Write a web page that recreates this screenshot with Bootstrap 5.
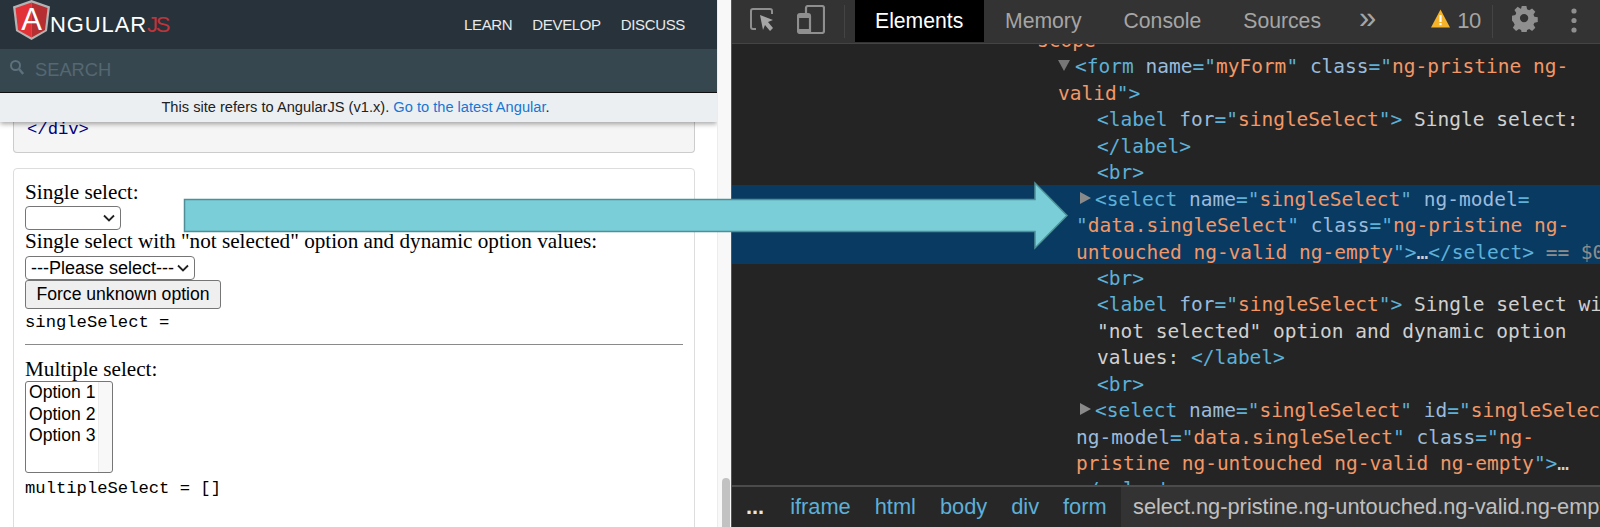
<!DOCTYPE html>
<html lang="en">
<head>
<meta charset="utf-8">
<title>AngularJS select</title>
<link rel="stylesheet" href="https://cdn.jsdelivr.net/npm/bootstrap@5.3.0/dist/css/bootstrap.min.css">
<style>
html,body{height:527px;overflow:hidden;background:#fff}
.stage{position:relative;width:1600px;height:527px;overflow:hidden}
.leftpane{width:731px;height:527px}
.leftmain{width:717px;height:527px;overflow:hidden;position:relative}
.pagebar{width:14px;height:527px;background:#f8f8f8;border-left:1px solid #ececec}
.pagethumb{width:8px;height:49px;background:#c2c2c2;border-radius:4px 4px 0 0;margin:478px 0 0 4px}
.ngbar{height:49px;background:#27323a;padding:0 32px 0 13px;flex-wrap:nowrap}
.brandrow{height:49px;font:400 22px/49px "Liberation Sans",sans-serif;color:#fff;letter-spacing:.9px}
.brandrow svg{width:37px;height:40px}
.brandjs{color:#c0343a;letter-spacing:-2.4px;margin-left:0}
.ngmenu{gap:20px;font:400 15px/1 "Liberation Sans",sans-serif;letter-spacing:-.35px;color:#e8eaeb}
.searchbar{height:43px;background:#37474f;padding:0 0 0 10px;gap:11px;font:400 18.3px/1 "Liberation Sans",sans-serif;color:#546872}
.searchbar svg{width:14px;height:15px;margin-top:-6px}
.blackline{height:1px;background:#101010}
.refbanner{height:29px;background:#eceff1;font:400 14.65px/29px "Liberation Sans",sans-serif;color:#212121;text-align:center;box-shadow:0 2px 5px rgba(0,0,0,.35);position:relative;z-index:2;padding-right:6px}
.refbanner a{color:#1976d2;text-decoration:none}
.docbody{padding:0 22px 0 13px}
.codebox{height:31px;background:#f5f5f5;border:1px solid #ccc;border-top:0;border-radius:0 0 4px 4px;padding:0 13px;font:17.2px/15px "Liberation Mono",monospace;color:#000080}
.democard{margin-top:15px;height:400px;border:1px solid #ddd;border-radius:4px;padding:12px 11px 0;font:21.2px/23px "Liberation Serif",serif;color:#000}
.democard select,.democard button{font:17.6px "Liberation Sans",sans-serif;color:#000;display:block}
.selone,.seltwo{appearance:none;-webkit-appearance:none;height:24px;border:1px solid #767676;border-radius:4px;padding:0 0 0 5px;background:#fff url("data:image/svg+xml,%3Csvg xmlns='http://www.w3.org/2000/svg' width='12' height='8'%3E%3Cpath d='M1 1.500l5 5 5-5' fill='none' stroke='%23222' stroke-width='1.800'/%3E%3C/svg%3E") no-repeat right 5px center}
.selone{width:96px;margin-top:2px}
.democard .seltwo{width:170px;margin-top:3px;font-size:18px}
.forcebtn{width:196px;height:29px;padding:0;background:#efefef;border:1px solid #767676;border-radius:3px}
.monoline{font:17.2px/20px "Liberation Mono",monospace;margin-top:4px}
.monotwo{margin-top:6px}
.sephr{margin:11px 0 13px;border:0;border-top:1px solid #8a8a8a;opacity:1;height:0}
.selmulti{width:88px;height:92px;margin-top:0;overflow-y:scroll;border:1px solid #767676;border-radius:3px;padding:0;background:linear-gradient(to left,#f8f8f8 13px,#ececec 13px,#ececec 14px,#fff 14px)}
.selmulti option{padding:0 3px;line-height:21.7px;min-height:21.7px}
.rightpane{width:869px;height:527px;background:#242424;border-left:1px solid #555;overflow:hidden}
.dttoolbar{height:44px;flex:none;background:#333;border-bottom:1px solid #444;position:relative;z-index:2;font:400 21.2px/42px "Liberation Sans",sans-serif;color:#a5a5a5}
.dttoolbar svg{display:block;flex:none}
.iconone{margin:8px 0 0 18px}
.icontwo{margin:5px 0 0 23px}
.vsep{width:1px;height:33px;background:#444;margin:5px 0 0 19px}
.tabset{margin-left:10px;flex-wrap:nowrap}
.tabset .nav-link{padding:0 21px;height:42px;color:#a5a5a5;font:inherit}
.tabset .nav-link.active{background:#000;color:#fff;padding:0 20px;width:129px}
.morechev{margin-left:17px;font-size:31px;line-height:36px;letter-spacing:-1px;font-weight:300}
.warnwrap{margin-left:56px;gap:7px;width:50px}
.warnwrap svg{margin-top:9px}
.warncount{font-size:22px;letter-spacing:-.5px}
.sepb{margin-left:11px}
.gearicon{margin:6px 0 0 19px}
.dotsicon{margin:8px 0 0 33px}
.domtree{height:457px;flex:none;overflow:hidden;font:19.5px/26.45px "DejaVu Sans Mono",monospace;color:#d0d0d0;margin-top:-16px}
.rowline{white-space:nowrap;height:26.45px;position:relative}
.lvla{padding-left:305px}
.lvlb{padding-left:326px}
.lvlc{padding-left:343px}
.lvld{padding-left:365px}
.lvle{padding-left:344px}
.lvlf{padding-left:363px}
.selrow{background:#093a62;margin:-2px 0 2px;padding-top:2px;height:79.35px;box-sizing:border-box}
.dk{color:#5db0d7}
.dn{color:#9bbbdc}
.dv{color:#f29766}
.dg{color:#8d8d8d}
.tri{display:inline-block;width:0;height:0;vertical-align:2px;margin-right:2px}
.tridown{border-left:6px solid transparent;border-right:6px solid transparent;border-top:11px solid #777;margin-left:-17px;margin-right:5px}
.triright{border-top:6px solid transparent;border-bottom:6px solid transparent;border-left:11px solid #8a8a8a;margin-left:-15px;margin-right:4px}
.gutdots{position:absolute;left:6px;top:-3px;color:#7c9ab5;font-size:14px;letter-spacing:-1px}
.crumbbar{height:42px;flex:none;background:#333;border-top:2px solid #4b4b4b;position:relative;z-index:2;font:400 21.8px/40px "Liberation Sans",sans-serif;color:#5db0d7;white-space:nowrap}
.crumbleft{background:#272727;width:389px;padding-left:14px;gap:24px;flex:none}
.crumbleft .more{color:#e6e6e6;font-weight:700;margin-right:2px}
.crumbcur{padding-left:12px;color:#c0c0c0;overflow:hidden}
.bigarrow{position:absolute;left:0;top:0;width:1100px;height:260px;z-index:5;pointer-events:none}
</style>
</head>
<body>
<div class="stage d-flex">
  <div class="leftpane d-flex">
    <div class="leftmain">
      <nav class="navbar ngbar d-flex justify-content-between">
        <div class="brandrow d-flex">
          <svg viewBox="0 0 37 40" aria-label="Angular logo">
            <polygon points="18.5,0 37,6.5 34,31 18.5,40 3,31 0,6.5" fill="#b3b3b3"/>
            <polygon points="18.5,2.5 18.5,37.5 5,30 2.5,8" fill="#e23237"/>
            <polygon points="18.5,2.5 18.5,37.5 32,30 34.5,8" fill="#b52e31"/>
            <text x="18.5" y="30" text-anchor="middle" font-family="Liberation Sans" font-size="31" fill="#fff" letter-spacing="0">A</text>
          </svg>
          <span>NGULAR</span><span class="brandjs">JS</span>
        </div>
        <div class="ngmenu d-flex"><span>LEARN</span><span>DEVELOP</span><span>DISCUSS</span></div>
      </nav>
      <div class="searchbar d-flex align-items-center">
        <svg viewBox="0 0 14 15"><circle cx="5.5" cy="5.5" r="4.5" fill="none" stroke="#5c717c" stroke-width="2"/><path d="M9 9l4.2 5" stroke="#5c717c" stroke-width="2.4" fill="none"/></svg>
        <span>SEARCH</span>
      </div>
      <div class="blackline"></div>
      <div class="refbanner">This site refers to AngularJS (v1.x). <a href="#">Go to the latest Angular</a>.</div>
      <div class="docbody">
        <div class="codebox">&lt;/div&gt;</div>
        <div class="democard">
          <div>Single select:</div>
          <select class="selone"><option></option></select>
          <div>Single select with "not selected" option and dynamic option values:</div>
          <select class="seltwo"><option>---Please select---</option></select>
          <button class="forcebtn" type="button">Force unknown option</button>
          <div class="monoline">singleSelect =</div>
          <hr class="sephr">
          <div>Multiple select:</div>
          <select class="selmulti" multiple size="4"><option>Option 1</option><option>Option 2</option><option>Option 3</option></select>
          <div class="monoline monotwo">multipleSelect = []</div>
        </div>
      </div>
    </div>
    <div class="pagebar"><div class="pagethumb"></div></div>
  </div>
  <div class="rightpane d-flex flex-column">
    <div class="dttoolbar d-flex">
      <svg class="iconone" width="24" height="24" viewBox="0 0 24 24"><path d="M6 21H3a2 2 0 0 1-2-2V3a2 2 0 0 1 2-2h17a2 2 0 0 1 2 2v3" fill="none" stroke="#8f8f8f" stroke-width="2"/><path d="M10 7l13 5-5 2 5 6-3 3-5-6-2 5z" fill="#a5a5a5"/></svg>
      <svg class="icontwo" width="28" height="29" viewBox="0 0 28 29"><path d="M9 8V3a2 2 0 0 1 2-2h14a2 2 0 0 1 2 2v23a2 2 0 0 1-2 2H3a2 2 0 0 1-2-2V11a2 2 0 0 1 2-2h8a2 2 0 0 1 2 2v17" fill="none" stroke="#8f8f8f" stroke-width="2.2"/><rect x="2" y="24" width="11" height="3" fill="#8f8f8f"/><rect x="2" y="10" width="11" height="3" fill="#8f8f8f"/></svg>
      <div class="vsep"></div>
      <ul class="nav tabset">
        <li class="nav-item"><a class="nav-link active" href="#">Elements</a></li>
        <li class="nav-item"><a class="nav-link" href="#">Memory</a></li>
        <li class="nav-item"><a class="nav-link" href="#">Console</a></li>
        <li class="nav-item"><a class="nav-link" href="#">Sources</a></li>
      </ul>
      <span class="morechev">»</span>
      <div class="warnwrap d-flex">
        <svg width="19" height="19" viewBox="0 0 19 19"><path d="M9.5 0.5L19 18.5H0z" fill="#f4b32a"/><rect x="8.4" y="6" width="2.2" height="7" fill="#fff"/><rect x="8.4" y="14" width="2.2" height="2.2" fill="#fff"/></svg>
        <span class="warncount">10</span>
      </div>
      <div class="vsep sepb"></div>
      <svg class="gearicon" width="26" height="26" viewBox="0 0 26 26"><path fill="#8f8f8f" fill-rule="evenodd" d="M10.5 0h5l.7 3.6 2.3 1 3.1-2 3.5 3.5-2 3.1 1 2.3 3.6.7v5l-3.6.7-1 2.3 2 3.1-3.5 3.5-3.1-2-2.3 1-.7 3.6h-5l-.7-3.6-2.3-1-3.1 2-3.5-3.5 2-3.1-1-2.3L0 15.5v-5l3.6-.7 1-2.3-2-3.1L6.100 .9l3.1 2 .6-.2zM13 8.500a4.500 4.500 0 1 0 0 9 4.500 4.500 0 0 0 0-9z" transform="scale(.93)"/></svg>
      <svg class="dotsicon" width="6" height="26" viewBox="0 0 6 26"><circle cx="3" cy="3" r="2.600" fill="#8f8f8f"/><circle cx="3" cy="12.500" r="2.600" fill="#8f8f8f"/><circle cx="3" cy="22" r="2.600" fill="#8f8f8f"/></svg>
    </div>
    <div class="domtree">
      <div class="rowline lvla"><span class="dv">scope</span><span class="dk">"</span></div>
      <div class="rowline lvlc"><span class="tri tridown"></span><span class="dk">&lt;form</span> <span class="dn">name</span><span class="dk">=</span><span class="dk">"</span><span class="dv">myForm</span><span class="dk">"</span> <span class="dn">class</span><span class="dk">="</span><span class="dv">ng-pristine ng-</span></div>
      <div class="rowline lvlb"><span class="dv">valid</span><span class="dk">"&gt;</span></div>
      <div class="rowline lvld"><span class="dk">&lt;label</span> <span class="dn">for</span><span class="dk">="</span><span class="dv">singleSelect</span><span class="dk">"&gt;</span> Single select:</div>
      <div class="rowline lvld"><span class="dk">&lt;/label&gt;</span></div>
      <div class="rowline lvld"><span class="dk">&lt;br&gt;</span></div>
      <div class="selrow">
        <div class="rowline lvlf"><span class="gutdots">...</span><span class="tri triright"></span><span class="dk">&lt;select</span> <span class="dn">name</span><span class="dk">="</span><span class="dv">singleSelect</span><span class="dk">"</span> <span class="dn">ng-model</span><span class="dk">=</span></div>
        <div class="rowline lvle"><span class="dk">"</span><span class="dv">data.singleSelect</span><span class="dk">"</span> <span class="dn">class</span><span class="dk">="</span><span class="dv">ng-pristine ng-</span></div>
        <div class="rowline lvle"><span class="dv">untouched ng-valid ng-empty</span><span class="dk">"&gt;</span>…<span class="dk">&lt;/select&gt;</span> <span class="dg">== $0</span></div>
      </div>
      <div class="rowline lvld"><span class="dk">&lt;br&gt;</span></div>
      <div class="rowline lvld"><span class="dk">&lt;label</span> <span class="dn">for</span><span class="dk">="</span><span class="dv">singleSelect</span><span class="dk">"&gt;</span> Single select with</div>
      <div class="rowline lvld">"not selected" option and dynamic option</div>
      <div class="rowline lvld">values: <span class="dk">&lt;/label&gt;</span></div>
      <div class="rowline lvld"><span class="dk">&lt;br&gt;</span></div>
      <div class="rowline lvlf"><span class="tri triright"></span><span class="dk">&lt;select</span> <span class="dn">name</span><span class="dk">="</span><span class="dv">singleSelect</span><span class="dk">"</span> <span class="dn">id</span><span class="dk">="</span><span class="dv">singleSelect</span></div>
      <div class="rowline lvle"><span class="dn">ng-model</span><span class="dk">="</span><span class="dv">data.singleSelect</span><span class="dk">"</span> <span class="dn">class</span><span class="dk">="</span><span class="dv">ng-</span></div>
      <div class="rowline lvle"><span class="dv">pristine ng-untouched ng-valid ng-empty</span><span class="dk">"&gt;</span>…</div>
      <div class="rowline lvle"><span class="dk">&lt;/select&gt;</span></div>
    </div>
    <div class="crumbbar d-flex">
      <div class="crumbleft d-flex"><span class="more">...</span><span>iframe</span><span>html</span><span>body</span><span>div</span><span>form</span></div>
      <div class="crumbcur">select.ng-pristine.ng-untouched.ng-valid.ng-empty</div>
    </div>
  </div>
  <svg class="bigarrow" viewBox="0 0 1100 260"><polygon points="184.500,199.500 1035,199.500 1035,183 1067,215.500 1035,248 1035,231.500 184.500,231.500" fill="#79ced8" stroke="#4f9098" stroke-width="1.500"/></svg>
</div>
<script src="https://cdn.jsdelivr.net/npm/bootstrap@5.3.0/dist/js/bootstrap.bundle.min.js"></script>
</body>
</html>
